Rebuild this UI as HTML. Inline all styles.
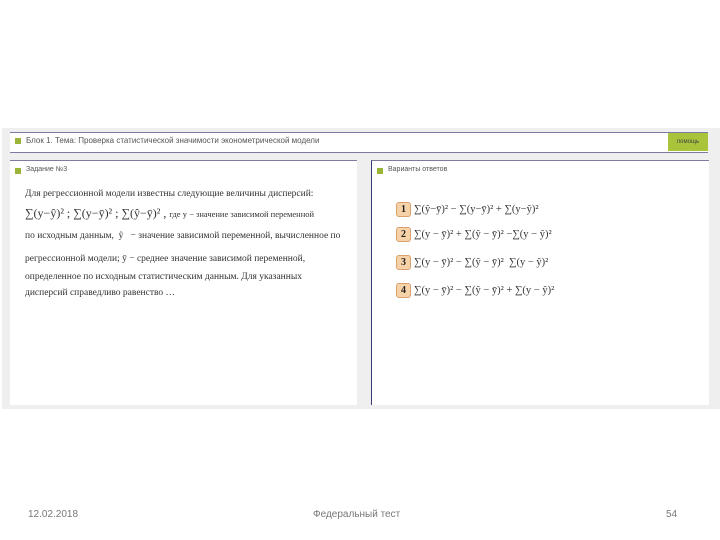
<!DOCTYPE html>
<html><head><meta charset="utf-8"><style>
body{margin:0;width:720px;height:540px;background:#fff;position:relative;overflow:hidden;font-family:"Liberation Sans",sans-serif}
.band{position:absolute;left:2px;top:128px;width:718px;height:281px;background:#efefef}
.hdr{position:absolute;left:10px;top:132px;width:698px;height:19px;background:#fff;border-top:1px solid #7d7aa3;border-bottom:1px solid #7d7aa3}
.hdr span{position:absolute;left:16px;top:3px;font-size:8px;color:#555}
.sq{position:absolute;width:6px;height:6px;background:#9ab43a}
.btn{position:absolute;left:668px;top:133px;width:40px;height:18px;background:#a8c43a;font-size:6px;color:#444;text-align:center;line-height:18px}
.p{position:absolute;background:#fff;border-top:1px solid #7d7aa3}
.lbl{position:absolute;left:16px;top:5px;font-size:7px;color:#555}
.txt{position:absolute;left:25px;font-family:"Liberation Serif",serif;font-size:9.5px;color:#333;white-space:nowrap}
.f{position:absolute;left:396px;font-family:"Liberation Serif",serif;font-size:10.5px;color:#333;white-space:nowrap}
.n{display:inline-block;width:13px;height:13px;background:#f6d2a8;border:1px solid #d9a070;border-radius:3px;text-align:center;font-weight:bold;font-size:10px;line-height:13px;margin-right:3px;color:#222}
.foot{position:absolute;top:509px;font-size:10px;color:#777}
</style></head><body>
<div class="band"></div>
<div class="hdr"><div class="sq" style="left:5px;top:5px"></div><span>Блок 1. Тема: Проверка статистической значимости эконометрической модели</span></div>
<div class="btn">помощь</div>
<div class="p" style="left:10px;top:160px;width:347px;height:244px">
<div class="sq" style="left:5px;top:7px"></div><div class="lbl">Задание №3</div></div>
<div class="txt" style="top:189px">Для регрессионной модели известны следующие величины дисперсий:</div>
<div class="txt" style="top:206px;font-size:12px">∑(y−ŷ)² ; ∑(y−ȳ)² ; ∑(ŷ−ȳ)² , <span style="font-size:8.5px">где y − значение зависимой переменной</span></div>
<div class="txt" style="top:231px">по исходным данным, &nbsp;ŷ &nbsp;&nbsp;− значение зависимой переменной, вычисленное по</div>
<div class="txt" style="top:254px">регрессионной модели; ȳ − среднее значение зависимой переменной,</div>
<div class="txt" style="top:272px">определенное по исходным статистическим данным. Для указанных</div>
<div class="txt" style="top:288px">дисперсий справедливо равенство …</div>
<div class="p" style="left:371px;top:160px;width:337px;height:244px;border-left:1px solid #3b3a78">
<div class="sq" style="left:5px;top:7px"></div><div class="lbl">Варианты ответов</div></div>
<div class="f" style="top:202px"><span class="n">1</span>∑(ŷ−ȳ)² − ∑(y−ȳ)² + ∑(y−ŷ)²</div>
<div class="f" style="top:227px"><span class="n">2</span>∑(y − ȳ)² + ∑(ŷ − ȳ)² −∑(y − ŷ)²</div>
<div class="f" style="top:255px"><span class="n">3</span>∑(y − ȳ)² − ∑(ŷ − ȳ)² &nbsp;∑(y − ŷ)²</div>
<div class="f" style="top:283px"><span class="n">4</span>∑(y − ȳ)² − ∑(ŷ − ȳ)² + ∑(y − ŷ)²</div>
<div class="foot" style="left:28px">12.02.2018</div>
<div class="foot" style="left:313px">Федеральный тест</div>
<div class="foot" style="left:666px">54</div>
</body></html>
